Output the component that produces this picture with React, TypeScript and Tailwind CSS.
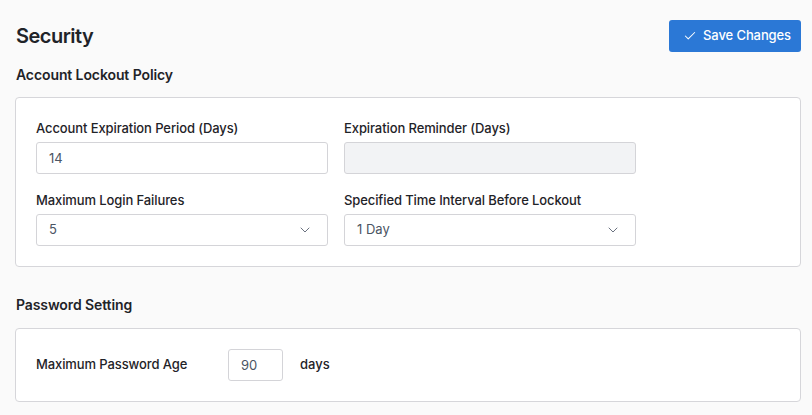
import { Check, ChevronDown } from 'lucide-react';

function Field({ label, children }: { label: string; children: React.ReactNode }) {
  return (
    <div className="flex flex-col">
      <label className="text-[13px] font-medium leading-5 tracking-[-0.1px] text-[#1f2328] mb-1">{label}</label>
      {children}
    </div>
  );
}

function SelectBox({ value }: { value: string }) {
  return (
    <div className="flex h-8 items-center justify-between rounded-[3px] border border-[#d4d4d8] bg-white pl-3 pr-3.5 text-[13px] text-[#4b5563]">
      <span>{value}</span>
      <ChevronDown className="h-4 w-4 text-[#6b7280]" strokeWidth={1.5} />
    </div>
  );
}

export default function App() {
  return (
    <div className="min-h-screen bg-[#fafafa] pl-[15px] pr-[11px] pt-5 font-['Inter',sans-serif] antialiased">
      <div className="flex h-8 items-center justify-between">
        <h1 className="pl-px text-[20px] font-semibold tracking-[-0.5px] text-[#1f2328]">Security</h1>
        <button className="flex h-8 items-center gap-1.5 rounded-[3px] bg-[#2b78d6] pl-3.5 pr-2.5 text-[13px] font-medium tracking-[-0.1px] text-white">
          <Check className="h-3.5 w-3.5" strokeWidth={1.75} />
          Save Changes
        </button>
      </div>

      <h2 className="mt-[13px] mb-3 pl-px text-[14px] font-semibold leading-5 tracking-[-0.1px] text-[#1f2328]">Account Lockout Policy</h2>
      <div className="rounded border border-[#d6d6da] bg-white px-5 pt-5 pb-5">
        <div className="grid w-[600px] grid-cols-2 gap-x-4 gap-y-4">
          <Field label="Account Expiration Period (Days)">
            <input
              defaultValue="14"
              className="h-8 rounded-[3px] border border-[#d4d4d8] bg-white px-3 text-[13px] text-[#4b5563] outline-none"
            />
          </Field>
          <Field label="Expiration Reminder (Days)">
            <input
              disabled
              className="h-8 rounded-[3px] border border-[#d4d4d8] bg-[#f2f3f5] px-3 text-[13px] outline-none"
            />
          </Field>
          <Field label="Maximum Login Failures">
            <SelectBox value="5" />
          </Field>
          <Field label="Specified Time Interval Before Lockout">
            <SelectBox value="1 Day" />
          </Field>
        </div>
      </div>

      <h2 className="mt-7 mb-[13px] pl-px text-[14px] font-semibold leading-5 tracking-[-0.1px] text-[#1f2328]">Password Setting</h2>
      <div className="rounded border border-[#d6d6da] bg-white px-5 py-5">
        <div className="flex items-center">
          <span className="w-[192px] text-[13px] font-medium tracking-[-0.1px] text-[#1f2328]">Maximum Password Age</span>
          <input
            defaultValue="90"
            className="h-8 w-[55px] rounded-[3px] border border-[#d4d4d8] bg-white px-3 text-[13px] text-[#4b5563] outline-none"
          />
          <span className="ml-[17px] text-[13px] font-medium text-[#1f2328]">days</span>
        </div>
      </div>
    </div>
  );
}
